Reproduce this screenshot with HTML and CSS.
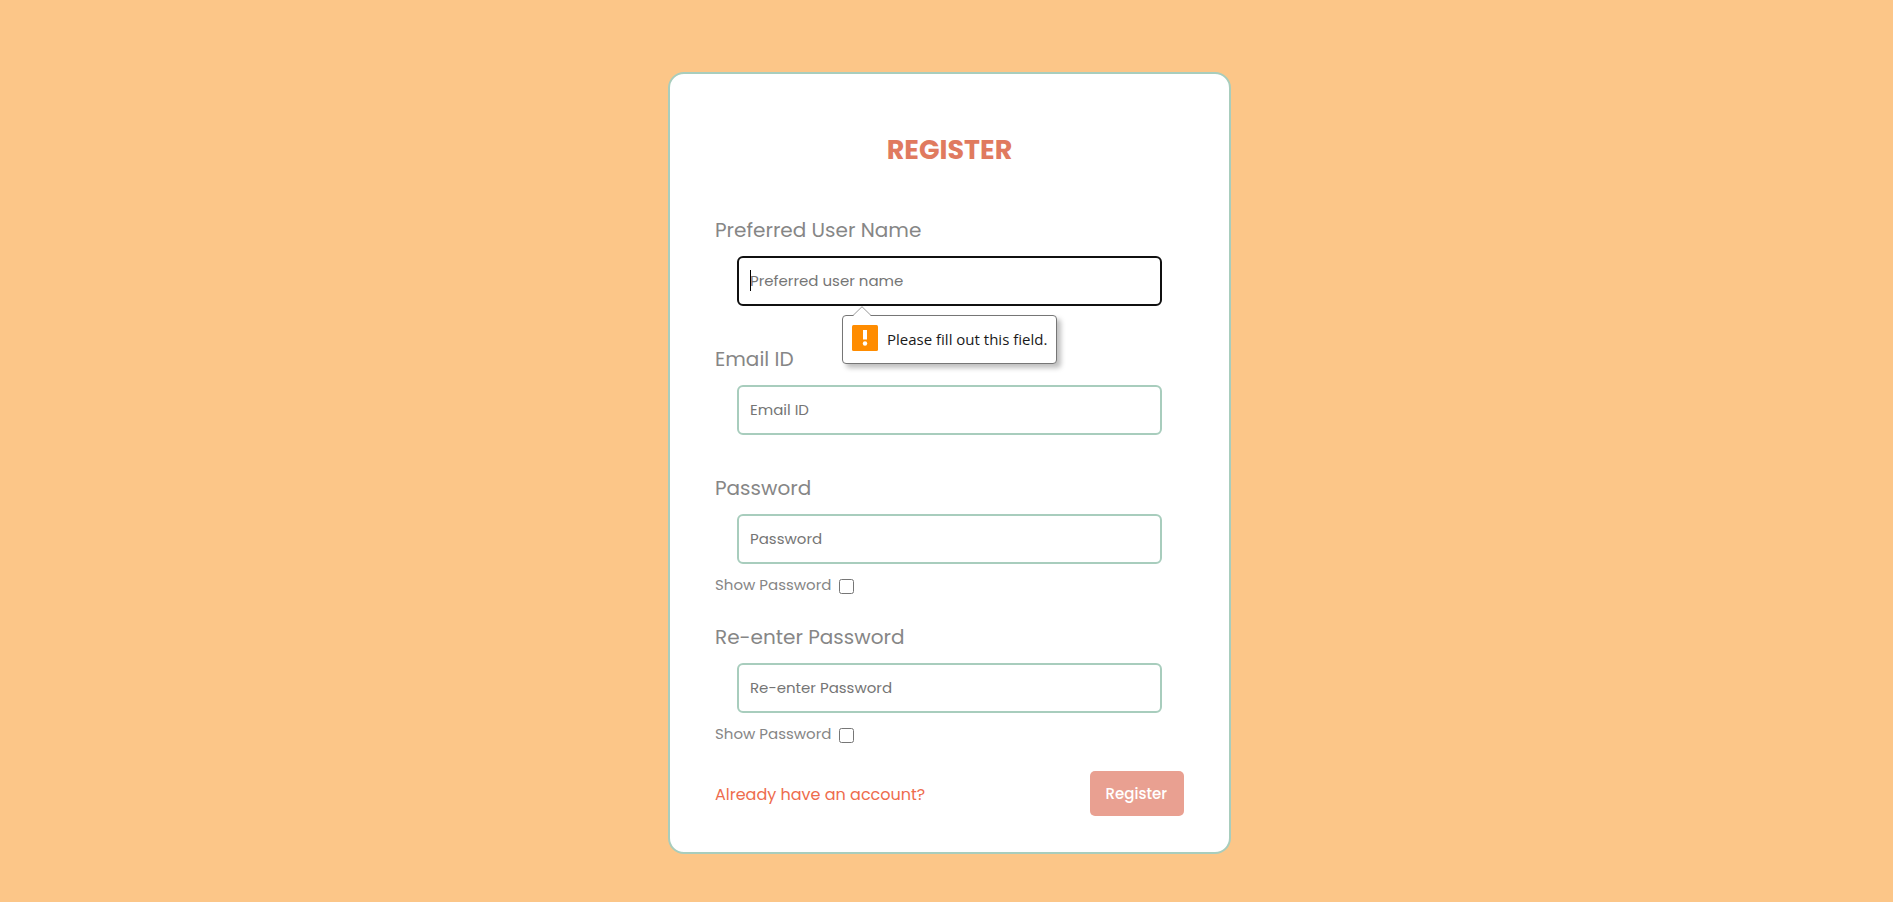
FILE: index.html
```html
<!DOCTYPE html>
<html lang="en">
<head>
<meta charset="utf-8">
<title>Register</title>
<link rel="stylesheet" href="styles.css">
</head>
<body>
<main class="page">
  <form class="card" novalidate>
    <h1 class="title">REGISTER</h1>
    <div class="field">
      <label class="label" for="username">Preferred User Name</label>
      <div class="control">
        <input class="input input-active" id="username" type="text" placeholder="Preferred user name" required>
        <span class="caret"></span>
        <div class="tooltip" role="alert">
          <svg class="tooltip-arrow" width="20" height="10" viewBox="0 0 20 10"><path d="M1 10 10 1l9 9z" fill="#fff"/><path d="M1 9.500 10 .7l9 8.800" fill="none" stroke="#999"/></svg>
          <svg class="tooltip-icon" width="26" height="26" viewBox="0 0 26 26"><rect width="26" height="26" rx="1.500" fill="#ff8c00"/><path d="M11 5h4v9.500h-4z" fill="#fff"/><circle cx="13" cy="18.500" r="2.200" fill="#fff"/></svg>
          <span>Please fill out this field.</span>
        </div>
      </div>
    </div>
    <div class="field">
      <label class="label" for="email">Email ID</label>
      <div class="control"><input class="input" id="email" type="email" placeholder="Email ID" required></div>
    </div>
    <div class="field field-password">
      <label class="label" for="password">Password</label>
      <div class="control"><input class="input" id="password" type="password" placeholder="Password" required></div>
      <div class="show"><label for="show1">Show Password</label><input class="check" id="show1" type="checkbox"></div>
    </div>
    <div class="field field-password">
      <label class="label" for="confirm">Re-enter Password</label>
      <div class="control"><input class="input" id="confirm" type="password" placeholder="Re-enter Password" required></div>
      <div class="show"><label for="show2">Show Password</label><input class="check" id="show2" type="checkbox"></div>
    </div>
    <div class="actions">
      <a class="link" href="#">Already have an account?</a>
      <button class="button" type="submit">Register</button>
    </div>
  </form>
</main>
</body>
</html>
```

FILE: styles.css
```css
* { box-sizing: border-box; }
body {
  margin: 0;
  background: #fcc688;
  font-family: Poppins, Inter, sans-serif;
  font-size: 15px;
  color: #868686;
}
.page {
  display: flex;
  justify-content: center;
  align-items: flex-start;
  min-height: 100vh;
  padding: 72px 0 48px 6px;
}
.card {
  width: 100%;
  max-width: 563px;
  padding: 54px 45px 36px;
  background: #fff;
  border: 2px solid #a8cdbd;
  border-radius: 16px;
}
.title {
  margin: 0 0 44px;
  font-size: 27px;
  line-height: 43px;
  font-weight: 700;
  text-align: center;
  color: #e07a5f;
}
.field { margin-bottom: 38px; }
.field-password { margin-bottom: 28px; }
.label {
  display: block;
  margin-bottom: 11px;
  font-size: 20px;
  line-height: 30px;
}
.control { position: relative; padding: 0 22px; }
.input {
  display: block;
  width: 100%;
  height: 50px;
  padding: 0 11px 2px;
  border: 2px solid #a8cdbd;
  border-radius: 6px;
  background: #fff;
  font: inherit;
  outline: none;
}
.input::placeholder { color: #757575; }
.input-active { border-color: #101010; }
.caret {
  position: absolute;
  left: 35px;
  top: 14px;
  width: 1px;
  height: 21px;
  background: #000;
}
.tooltip {
  position: absolute;
  z-index: 1;
  left: 127px;
  top: 59px;
  display: flex;
  align-items: center;
  gap: 9px;
  height: 49px;
  padding: 0 9px 2px;
  border: 1px solid #767676;
  border-radius: 4px;
  background: #fff;
  box-shadow: 4px 4px 5px rgba(0, 0, 0, .25);
  color: #1a1a1a;
  font-family: "Segoe UI", "Open Sans", sans-serif;
  font-size: 15px;
  white-space: nowrap;
}
.tooltip-arrow { position: absolute; left: 9px; top: -10px; }
.tooltip-icon { margin-bottom: 2px; }
.show {
  display: flex;
  align-items: center;
  gap: 8px;
  height: 20px;
  margin-top: 10px;
}
.check { width: 15px; height: 15px; margin: 4px 0 0; }
.actions {
  display: flex;
  justify-content: space-between;
  align-items: center;
}
.link { padding-top: 2px; color: #ee6c4d; font-size: 16px; text-decoration: none; }
.button {
  height: 45px;
  padding: 0 17px 0 16px;
  border: 0;
  border-radius: 5px;
  background: #e9a091;
  color: #fff;
  font: inherit;
  font-weight: 500;
}
```
